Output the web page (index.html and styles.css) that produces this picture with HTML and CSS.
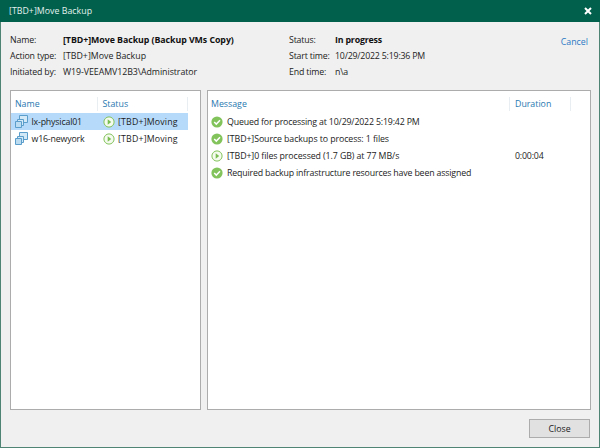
FILE: index.html
```html
<!DOCTYPE html>
<html lang="en">
<head>
<meta charset="utf-8">
<title>[TBD+]Move Backup</title>
<link rel="stylesheet" href="styles.css">
</head>
<body>
<svg class="defs" width="0" height="0" aria-hidden="true">
  <symbol id="ok" viewBox="0 0 12 12"><circle cx="6" cy="6" r="5.6" fill="#82c35b"/><path d="M3.2 6l2.1 2.1 3.7-3.8" fill="none" stroke="#fff" stroke-width="1.5"/></symbol>
  <symbol id="play" viewBox="0 0 12 12"><circle cx="6" cy="6" r="5.1" fill="#f5fbef" stroke="#82c35b"/><path d="M4.7 3.2v5.6L8.2 6z" fill="#79bd50"/></symbol>
  <symbol id="vm" viewBox="0 0 13 13"><path d="M4.5 4.5v-4h8v7h-4" fill="#d3e9f7" stroke="#5b9dcb"/><path d="M2.5 6.5v-2h6v6h-2" fill="#d3e9f7" stroke="#5b9dcb"/><path d="M.5 6.5h6v6h-6z" fill="#bcdcf2" stroke="#5b9dcb"/></symbol>
</svg>
<div class="window">
  <header class="titlebar">
    <span class="wide">[TBD+]Move Backup</span>
    <svg class="x" viewBox="0 0 8 8"><path d="M1 1l6 6M7 1L1 7" stroke="#fff" stroke-width="2"/></svg>
  </header>
  <section class="info">
    <dl class="facts">
      <dt>Name:</dt><dd class="strong name">[TBD+]Move Backup (Backup VMs Copy)</dd>
      <dt>Action type:</dt><dd class="wide">[TBD+]Move Backup</dd>
      <dt>Initiated by:</dt><dd class="admin">W19-VEEAMV12B3\Administrator</dd>
    </dl>
    <dl class="facts times">
      <dt>Status:</dt><dd class="strong">In progress</dd>
      <dt>Start time:</dt><dd class="date">10/29/2022 5:19:36 PM</dd>
      <dt>End time:</dt><dd>n\a</dd>
    </dl>
    <a class="cancel">Cancel</a>
  </section>
  <main class="panels">
    <div class="panel jobs">
      <div class="row head"><span>Name</span><span class="split">Status</span></div>
      <div class="row selected"><span class="cell"><svg class="vm"><use href="#vm"/></svg>lx-physical01</span><span class="cell moving"><svg class="state"><use href="#play"/></svg>[TBD+]Moving</span></div>
      <div class="row"><span class="cell"><svg class="vm"><use href="#vm"/></svg>w16-newyork</span><span class="cell moving"><svg class="state"><use href="#play"/></svg>[TBD+]Moving</span></div>
    </div>
    <div class="panel log">
      <div class="row head"><span>Message</span><span class="split">Duration</span></div>
      <div class="row"><span class="cell"><svg class="state"><use href="#ok"/></svg>Queued for processing at 10/29/2022 5:19:42 PM</span></div>
      <div class="row"><span class="cell tagged"><svg class="state"><use href="#ok"/></svg>[TBD+]Source backups to process: 1 files</span></div>
      <div class="row"><span class="cell tagged"><svg class="state"><use href="#play"/></svg>[TBD+]0 files processed (1.7 GB) at 77 MB/s</span><span class="duration">0:00:04</span></div>
      <div class="row"><span class="cell"><svg class="state"><use href="#ok"/></svg>Required backup infrastructure resources have been assigned</span></div>
    </div>
  </main>
  <footer class="actions"><button class="close">Close</button></footer>
</div>
</body>
</html>
```
FILE: styles.css
```css
* { box-sizing: border-box; }
body {
  margin: 0;
  font: 8.8px/16px "Open Sans", "Noto Sans", sans-serif;
  color: #1c1c1c;
  letter-spacing: -0.17px;
  white-space: nowrap;
}
.defs { position: absolute; }
.window {
  display: flex;
  flex-direction: column;
  width: 600px;
  height: 448px;
  border: 1px solid #4f8475;
  border-top: 0;
  background: #f0f0f0;
}
.titlebar {
  display: flex;
  flex: none;
  align-items: center;
  justify-content: space-between;
  height: 22px;
  margin: 0 -1px;
  padding: 0 8px 0 9px;
  background: #00604c;
  color: #e4f0ec;
}
.x { width: 8px; height: 8px; }
.wide { letter-spacing: 0.02px; }
.admin { letter-spacing: -0.05px; }
.info {
  display: grid;
  grid-template-columns: 279px 1fr auto;
  height: 68px;
  padding: 10px 11px 0 9px;
}
.facts {
  display: grid;
  grid-template-columns: 53px auto;
  grid-auto-rows: 16px;
  align-content: start;
  margin: 0;
}
.times { grid-template-columns: 46px auto; }
dd { margin: 0; }
.strong { font-weight: 700; color: #111; }
.name { letter-spacing: -0.05px; }
.date { letter-spacing: -0.2px; }
.cancel { padding-top: 2px; color: #2b78c4; letter-spacing: 0; }
.panels {
  display: grid;
  grid-template-columns: 191px 384px;
  gap: 6px;
  height: 320px;
  padding-left: 9px;
}
.panel {
  padding: 4px 12px 0 0;
  border: 1px solid #acacac;
  background: #fff;
}
.row {
  display: grid;
  grid-template-columns: 87.5px 1fr;
  align-items: center;
  height: 17px;
}
.jobs .row { padding-left: 4px; }
.log .row { grid-template-columns: 304px 1fr; padding-left: 3px; }
.log { padding-right: 19px; }
.head { height: 18px; color: #2878b0; letter-spacing: 0; }
.head span { line-height: 14px; }
.head .split {
  margin-left: -6px;
  padding-left: 5px;
  border: solid #e8eef2;
  border-width: 0 1px;
}
.jobs .selected { background: #b6dafa; }
.cell { display: flex; align-items: center; }
.moving { letter-spacing: 0.17px; }
.tagged { letter-spacing: -0.09px; }
.vm { width: 13px; height: 13px; margin-right: 3.5px; }
.state { width: 12px; height: 12px; margin-right: 4px; }
.moving .state { margin-right: 3.5px; }
.actions { display: flex; justify-content: flex-end; padding: 9px 9px 0 0; }
.close {
  width: 61px;
  height: 19px;
  padding: 0;
  border: 1px solid #acacac;
  background: #e1e1e1;
  color: #222;
  font: inherit;
  letter-spacing: 0;
}
```
